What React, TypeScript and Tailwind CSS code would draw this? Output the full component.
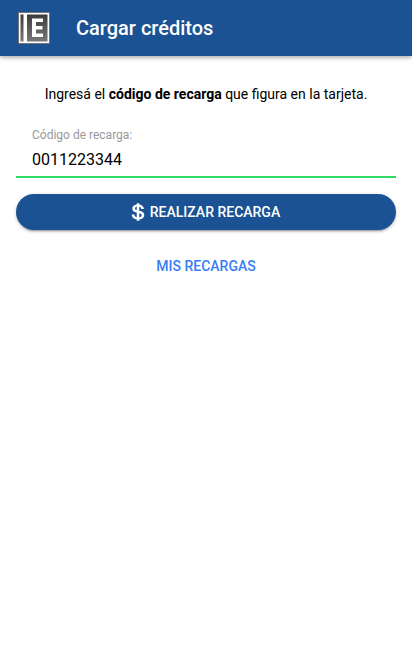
import { useState } from "react";
import { IoLogoUsd } from "react-icons/io";

function Logo() {
  return (
    <svg className="h-8 w-8" viewBox="0 0 32 32">
      <defs>
        <linearGradient id="logo-bg" x1="0" y1="0" x2="0" y2="1">
          <stop offset="0" stopColor="#3c3c3c" />
          <stop offset="1" stopColor="#777" />
        </linearGradient>
      </defs>
      <rect width="32" height="32" fill="#77736e" />
      <rect x="1" y="1" width="30" height="30" fill="#fff" />
      <rect x="2.500" y="2.500" width="27" height="27" fill="url(#logo-bg)" />
      <rect x="5.500" y="2" width="3.500" height="28" fill="#fff" />
      <path d="M14 6.500h11v3.500h-7v4h6.500v3.500H18v4h7V25H14z" fill="#fff" />
    </svg>
  );
}

export default function App() {
  const [code, setCode] = useState("0011223344");

  return (
    <div className="flex min-h-screen flex-col bg-white font-[Roboto,sans-serif] text-black">
      <header className="flex h-14 items-center bg-[#1b5293] pl-[18px] text-white shadow-[0_2px_4px_rgba(0,0,0,0.3)]">
        <Logo />
        <h1 className="ml-[26px] text-xl font-medium">Cargar créditos</h1>
      </header>
      <main className="flex flex-col px-4 pt-7">
        <p className="text-center text-sm leading-5">
          Ingresá el <strong>código de recarga</strong> que figura en la tarjeta.
        </p>
        <label className="mt-5 flex h-[54px] flex-col border-b-2 border-[#32db64] px-4 pt-1">
          <span className="text-xs leading-[14px] text-[#999]">Código de recarga:</span>
          <input
            value={code}
            onChange={(e) => setCode(e.target.value)}
            className="mt-2 h-5 w-full text-base leading-5 outline-none"
          />
        </label>
        <button className="mt-4 flex h-9 items-center justify-center rounded-full bg-[#1b5293] text-sm font-medium text-white shadow-[0_2px_2px_rgba(0,0,0,0.14),0_3px_1px_-2px_rgba(0,0,0,0.2),0_1px_5px_rgba(0,0,0,0.12)]">
          <IoLogoUsd className="mr-0.5 -ml-1 h-5 w-5" />
          REALIZAR RECARGA
        </button>
        <button className="mt-[18px] h-9 text-sm font-medium text-[#387ef5]">
          MIS RECARGAS
        </button>
      </main>
    </div>
  );
}
